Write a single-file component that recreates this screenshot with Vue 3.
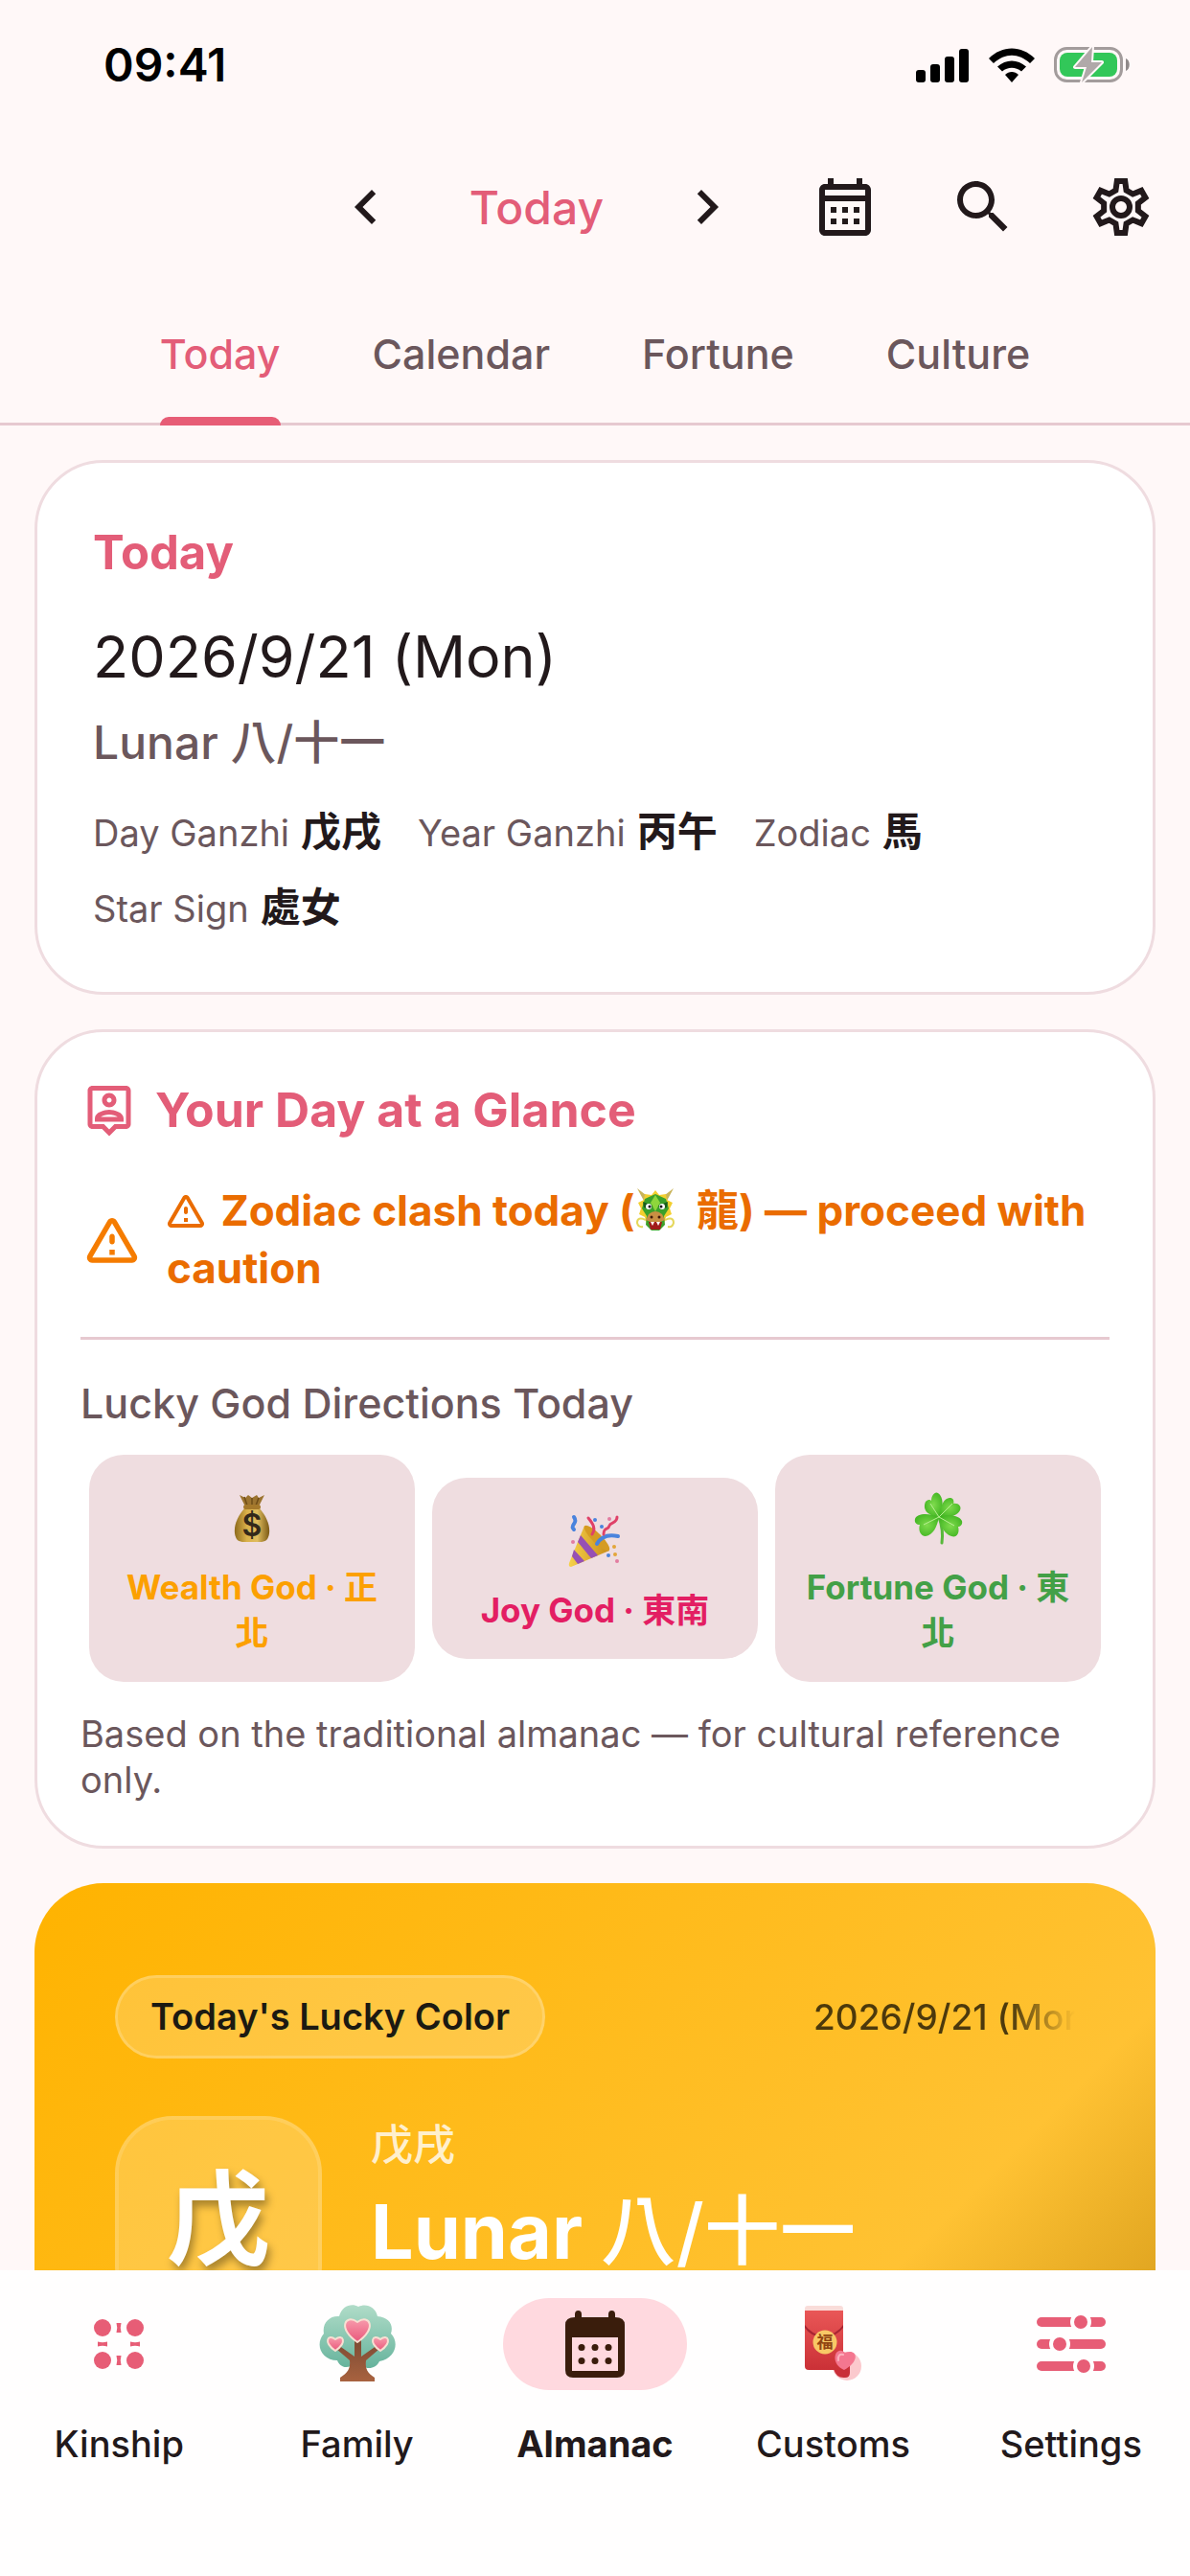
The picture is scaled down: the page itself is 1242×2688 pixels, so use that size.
<template>
  <div class="app">
    <header class="top">
      <div class="status">
        <span class="time">09:41</span>
        <div class="status-icons">
          <svg width="56" height="36" viewBox="0 0 56 36" aria-hidden="true">
            <rect x="0" y="23" width="10" height="13" rx="3" />
            <rect x="15" y="17" width="10" height="19" rx="3" />
            <rect x="30" y="9" width="10" height="27" rx="3" />
            <rect x="45" y="1" width="10" height="35" rx="3" />
          </svg>
          <svg width="48" height="36" viewBox="0 0 48 36" aria-hidden="true">
            <path d="M0 11C14-3 34-3 48 11l-5 5C31 5 17 5 5 16z" />
            <path d="M9 19.500c9-8 21-8 30 0l-5 5c-6-5-14-5-20 0z" />
            <path d="M17 28c4-4 10-4 14 0l-7 8z" />
          </svg>
          <svg width="80" height="40" viewBox="0 0 80 40" aria-hidden="true">
            <rect x="1.500" y="2.500" width="69" height="34" rx="12" fill="none" stroke="#a39c9c" stroke-width="3" />
            <rect x="6" y="7" width="60" height="25" rx="8" fill="#32c759" />
            <path d="M75 13c5 2 5 11 0 13z" fill="#8f8989" />
            <path d="M40 1L22 22h12l-5 16 21-21H39z" fill="#b0a9a9" stroke="#fff8f8" stroke-width="4" stroke-linejoin="round" paint-order="stroke" />
          </svg>
        </div>
      </div>

      <div class="toolbar">
        <button class="icon-btn" aria-label="Previous day">
          <svg class="icon" viewBox="0 0 24 24"><path d="M15.410 7.410L14 6l-6 6 6 6 1.410-1.410L10.830 12z" /></svg>
        </button>
        <button class="today-btn">Today</button>
        <button class="icon-btn" aria-label="Next day">
          <svg class="icon" viewBox="0 0 24 24"><path d="M10 6L8.590 7.410 13.170 12l-4.580 4.590L10 18l6-6z" /></svg>
        </button>
        <button class="icon-btn" aria-label="Pick a date">
          <svg class="icon" viewBox="0 0 24 24">
            <path d="M19 4h-1V2h-2v2H8V2H6v2H5c-1.110 0-1.990.9-1.990 2L3 20c0 1.100.890 2 2 2h14c1.100 0 2-.9 2-2V6c0-1.100-.9-2-2-2zm0 16H5V10h14v10zm0-12H5V6h14v2zM9 14H7v-2h2v2zm4 0h-2v-2h2v2zm4 0h-2v-2h2v2zm-8 4H7v-2h2v2zm4 0h-2v-2h2v2zm4 0h-2v-2h2v2z" />
          </svg>
        </button>
        <button class="icon-btn" aria-label="Search">
          <svg class="icon" viewBox="0 0 24 24">
            <path d="M15.500 14h-.79l-.28-.27C15.410 12.590 16 11.110 16 9.500 16 5.910 13.090 3 9.500 3S3 5.910 3 9.500 5.910 16 9.500 16c1.610 0 3.090-.59 4.230-1.570l.27.28v.79l5 4.990L20.490 19l-4.990-5zm-6 0C7.010 14 5 11.990 5 9.500S7.010 5 9.500 5 14 7.010 14 9.500 11.990 14 9.500 14z" />
          </svg>
        </button>
        <button class="icon-btn" aria-label="Options">
          <svg class="icon line" viewBox="0 0 24 24">
            <path d="M10.600 3L13.400 3L13.850 6.200L16.100 7.500L19.090 6.290L20.490 8.710L17.950 10.700V13.300L20.490 15.290L19.090 17.710L16.100 16.500L13.850 17.800L13.400 21H10.600L10.150 17.800L7.900 16.500L4.910 17.710L3.510 15.290L6.050 13.300V10.700L3.510 8.710L4.910 6.290L7.900 7.500L10.150 6.200z" />
            <circle cx="12" cy="12" r="3" />
          </svg>
        </button>
      </div>

      <nav class="tabs">
        <a v-for="tab in tabs" :key="tab" href="#" :class="['tab', { active: tab === currentTab }]" @click.prevent="currentTab = tab">
          <span>{{ tab }}</span>
        </a>
      </nav>
    </header>

    <main class="content">
      <section class="card today-card">
        <h2 class="title">Today</h2>
        <p class="date">2026/9/21 (Mon)</p>
        <p class="lunar">Lunar 八/十一</p>
        <dl class="facts">
          <div v-for="fact in facts" :key="fact.label" class="fact">
            <dt>{{ fact.label }}</dt>
            <dd>{{ fact.value }}</dd>
          </div>
        </dl>
      </section>

      <section class="card glance-card">
        <div class="glance-head">
          <svg class="pin" viewBox="0 0 24 24" aria-hidden="true">
            <path d="M19 2H5c-1.110 0-2 .9-2 2v14c0 1.100.890 2 2 2h4l3 3 3-3h4c1.100 0 2-.9 2-2V4c0-1.100-.9-2-2-2zm0 16h-4.830l-.59.590L12 20.170l-1.590-1.590-.58-.58H5V4h14v14zM12 11c1.650 0 3-1.350 3-3s-1.350-3-3-3-3 1.350-3 3 1.350 3 3 3zm0-4c.550 0 1 .450 1 1s-.450 1-1 1-1-.450-1-1 .450-1 1-1zm6 8.580c0-2.500-3.970-3.580-6-3.580s-6 1.080-6 3.580V17h12v-1.420zM8.480 15c.740-.510 2.230-1 3.520-1s2.780.490 3.520 1H8.480z" />
          </svg>
          <h2 class="title">Your Day at a Glance</h2>
        </div>

        <div class="warning">
          <svg class="warning-icon" viewBox="0 0 24 24" aria-hidden="true"><path :d="warningPath" /></svg>
          <p>
            <svg class="warning-inline" viewBox="2 3 20 19" aria-hidden="true"><path :d="warningPath" /></svg>
            Zodiac clash today (<svg class="dragon" viewBox="0 0 42 48" role="img" aria-label="Dragon">
              <path d="M9 14L2 1l13 10zM33 14L40 1 27 11z" fill="#c9b45a" />
              <path d="M21 3l4 5 7-1 1 6 6 3-3 6 2 6-6 3-2 7H12l-2-7-6-3 2-6-3-6 6-3 1-6 7 1z" fill="#f3cf2e" />
              <path d="M21 7l11 5 3 10-5 8 1 9-6 6h-8l-6-6 1-9-5-8 3-10z" fill="#3ba02a" />
              <path d="M21 8l5 8-5 9-5-9z" fill="#8ed63c" />
              <path d="M8 15l10 4-3 4-6-2zM34 15l-10 4 3 4 6-2z" fill="#185c1c" />
              <circle cx="14" cy="20" r="3" fill="#fff" />
              <circle cx="28" cy="20" r="3" fill="#fff" />
              <circle cx="15" cy="20" r="1.500" fill="#111" />
              <circle cx="27" cy="20" r="1.500" fill="#111" />
              <path d="M14 28q7-6 14 0l3 6q-10 5-20 0z" fill="#c98f43" />
              <path d="M14 36h14l-2 8H16z" fill="#a11a1a" />
              <path d="M16 36l2 4 2-4M22 36l2 4 2-4" fill="#fff" />
              <circle cx="17" cy="31" r="1.500" fill="#401a0c" />
              <circle cx="25" cy="31" r="1.500" fill="#401a0c" />
              <path d="M11 34q-9-4-9 3 1 5 6 4M31 34q9-4 9 3-1 5-6 4" fill="none" stroke="#e5d75a" stroke-width="2" />
            </svg>
            龍) — proceed with caution
          </p>
        </div>

        <hr />

        <h3 class="subtitle">Lucky God Directions Today</h3>
        <div class="gods">
          <div v-for="god in gods" :key="god.name" :class="['god', god.kind]">
            <svg v-if="god.kind === 'wealth'" class="emoji" viewBox="0 0 60 60" aria-hidden="true">
              <defs>
                <linearGradient id="bag" x1="0" x2="1">
                  <stop offset="0" stop-color="#8d6a1c" />
                  <stop offset=".35" stop-color="#d9b14a" />
                  <stop offset=".65" stop-color="#e0bd5e" />
                  <stop offset="1" stop-color="#7c5a15" />
                </linearGradient>
              </defs>
              <path d="M23 18L17 6l6 3 3-3 4 3 5-3 2 3 6-3-6 12z" fill="#9c7430" />
              <path d="M25 17L22 8M30 17V9M34 17l3-8" stroke="#6f4d18" stroke-width="1.500" />
              <path d="M23 19h14c8 9 12 18 11 27-1 7-4 9-10 9H22c-6 0-9-2-10-9-1-9 3-18 11-27z" fill="url(#bag)" />
              <rect x="21" y="16" width="18" height="5" rx="2.500" fill="#a5792b" />
              <text x="30" y="49" text-anchor="middle" class="coin">$</text>
            </svg>
            <svg v-else-if="god.kind === 'joy'" class="emoji" viewBox="0 0 60 60" aria-hidden="true">
              <defs>
                <linearGradient id="cone" x1="0" x2="1">
                  <stop offset="0" stop-color="#f6d24a" />
                  <stop offset="1" stop-color="#c98d1a" />
                </linearGradient>
              </defs>
              <path d="M19 14c10 3 22 16 26 26L5 57q-3 0-2-4z" fill="url(#cone)" />
              <path d="M15 24l18 21-7 3-14-17zM8 39l11 12-7 3-6-8z" fill="#9650b5" />
              <ellipse cx="32" cy="27" rx="5" ry="18" transform="rotate(-45 32 27)" fill="#d59b23" />
              <path d="M8 18c-5-5 5-6 0-13M32 33c5-9 13-10 22-8" fill="none" stroke="#4a83dd" stroke-width="4" stroke-linecap="round" />
              <path d="M27 23c4-6 1-11-4-17M39 23c0-8 5-4 6-9 1-4 8-2 8-9" fill="none" stroke="#df4168" stroke-width="3" stroke-linecap="round" />
              <g fill="#4a83dd"><circle cx="30" cy="8" r="2" /><circle cx="37" cy="15" r="2" /><circle cx="44" cy="45" r="2" /></g>
              <g fill="#e27da0"><circle cx="45" cy="7" r="2" /><circle cx="53" cy="51" r="2" /><circle cx="7" cy="31" r="2" /></g>
              <g fill="#e3a63a"><circle cx="50" cy="36" r="2" /><circle cx="51" cy="44" r="2" /></g>
            </svg>
            <svg v-else class="emoji" viewBox="0 0 60 60" aria-hidden="true">
              <defs>
                <radialGradient id="leaf" cx=".5" cy=".5" r=".6">
                  <stop offset="0" stop-color="#7fdb4d" />
                  <stop offset="1" stop-color="#3fb320" />
                </radialGradient>
              </defs>
              <path d="M31 29q5 14 3 27" fill="none" stroke="#58b83b" stroke-width="3" stroke-linecap="round" />
              <path d="M31 29C17 27 14 20 17 13c3-3 5-2 6-1 0-6 4-10 7-8 6 4 6 15 1 25z" fill="url(#leaf)" />
              <path d="M31 29C32 17 37 8 43 9c3 0 4 4 3 6 5-1 9 3 7 7-3 6-12 8-22 7z" fill="url(#leaf)" />
              <path d="M31 29C18 24 8 26 6 31c-1 4 2 6 5 6-2 6 1 12 6 12 8-1 12-10 14-20z" fill="url(#leaf)" />
              <path d="M31 29c12-4 22-1 24 4 1 4-2 6-4 6 2 7-2 12-7 10-7-2-12-11-13-20z" fill="url(#leaf)" />
              <path d="M31 29L22 15M31 29l14-14M31 29L15 37M31 29l16 9" stroke="#b9ef93" stroke-width="1" />
            </svg>
            <p>{{ god.name }} · {{ god.direction }}</p>
          </div>
        </div>
        <p class="note">Based on the traditional almanac — for cultural reference only.</p>
      </section>

      <section class="lucky-card">
        <div class="lucky-head">
          <span class="chip">Today's Lucky Color</span>
          <span class="lucky-date">2026/9/21 (Mon)</span>
        </div>
        <div class="lucky-body">
          <div class="stem">戊</div>
          <div class="lucky-text">
            <p class="ganzhi">戊戌</p>
            <p class="lucky-lunar">Lunar <span>八/十一</span></p>
          </div>
        </div>
      </section>
    </main>

    <nav class="bottom-nav">
      <a v-for="item in navItems" :key="item" href="#" :class="['nav-item', { active: item === currentNav }]" @click.prevent="currentNav = item">
        <span class="nav-icon">
          <svg v-if="item === 'Kinship'" width="54" height="54" viewBox="0 0 54 54" fill="#e75d76" aria-hidden="true">
            <circle cx="10" cy="10" r="9" /><circle cx="44" cy="10" r="9" />
            <circle cx="10" cy="44" r="9" /><circle cx="44" cy="44" r="9" />
            <path d="M24.500 5h5q-1.500 5 0 10h-5q1.500-5 0-10zM24.500 39h5q-1.500 5 0 10h-5q1.500-5 0-10zM5 24.500v5q5-1.500 10 0v-5q-5 1.500-10 0zM39 24.500v5q5-1.500 10 0v-5q-5 1.500-10 0z" />
          </svg>
          <svg v-else-if="item === 'Family'" width="82" height="82" viewBox="0 0 82 82" aria-hidden="true">
            <defs>
              <linearGradient id="crown" x1="0" y1="0" x2="0" y2="1">
                <stop offset="0" stop-color="#b0dcc8" />
                <stop offset="1" stop-color="#66b39c" />
              </linearGradient>
              <linearGradient id="trunk" x1="0" y1="0" x2="0" y2="1">
                <stop offset="0" stop-color="#7d4b34" />
                <stop offset="1" stop-color="#a8623f" />
              </linearGradient>
              <linearGradient id="heart" x1="0" y1="0" x2="0" y2="1">
                <stop offset="0" stop-color="#f79aab" />
                <stop offset="1" stop-color="#e9587b" />
              </linearGradient>
            </defs>
            <path d="M22 12C25 0 36-2 42 2c8-4 18 0 20 10 12 1 17 9 14 18 9 9 5 26-12 29-3 7-12 9-17 5H34c-7 3-12-1-14-6C4 58-4 42 6 30 4 19 12 11 22 12z" fill="url(#crown)" />
            <path d="M38 37h7v17l17-12 2 4-14 12c-1 8 1 13 9 18v4H23v-4c8-5 11-10 10-18L19 46l2-4 17 12z" fill="url(#trunk)" />
            <g fill="url(#heart)" stroke="#f8dfd2" stroke-width="2" stroke-linejoin="round">
              <path d="M41 39C20 25 28 9 41 18c13-9 21 7 0 21z" />
              <path d="M18 48C5 39 10 30 18 36c8-6 13 3 0 12z" />
              <path d="M65 48c-13-9-8-18 0-12 8-6 13 3 0 12z" />
            </g>
          </svg>
          <svg v-else-if="item === 'Almanac'" width="62" height="70" viewBox="0 0 62 70" aria-hidden="true">
            <path fill-rule="evenodd" d="M10 7V4q0-4 3.500-4T17 4v3h28V4q0-4 3.500-4T52 4v3q10 0 10 8v47q0 8-8 8H8q-8 0-8-8V15q0-8 10-8zM7 28v35h48V28z" />
            <circle cx="17" cy="38.500" r="3.500" /><circle cx="31" cy="38.500" r="3.500" /><circle cx="45" cy="38.500" r="3.500" />
            <circle cx="17" cy="52.500" r="3.500" /><circle cx="31" cy="52.500" r="3.500" /><circle cx="45" cy="52.500" r="3.500" />
          </svg>
          <svg v-else-if="item === 'Customs'" width="60" height="80" viewBox="0 0 60 80" aria-hidden="true">
            <defs>
              <linearGradient id="packet" x1="0" y1="0" x2="0" y2="1">
                <stop offset="0" stop-color="#e95757" />
                <stop offset="1" stop-color="#ca3036" />
              </linearGradient>
            </defs>
            <rect x="1" y="0" width="40" height="12" rx="3" fill="#f9dcd9" />
            <circle cx="45" cy="63" r="15" fill="#fbc9cd" />
            <path d="M32 60h16v10q0 5-5 5-9 1-12-9z" fill="#c92e38" />
            <path d="M1 5h40v62H5q-4 0-4-4z" fill="url(#packet)" />
            <path d="M1 20q6 9 20 12Q35 29 41 20v3q-7 9-20 11Q7 32 1 23z" fill="#a72532" />
            <circle cx="22" cy="38" r="12.500" fill="#f8c866" />
            <text x="22" y="44" text-anchor="middle" class="fu">福</text>
            <path d="M42 67C26 60 33 40 43 49c12-5 17 8-1 18z" fill="#f47790" />
            <path d="M36 57q-1-7 5-6" fill="none" stroke="#fbb1bd" stroke-width="2" stroke-linecap="round" />
          </svg>
          <svg v-else width="72" height="62" viewBox="0 0 72 62" fill="#e75d76" aria-hidden="true">
            <rect y="3" width="72" height="10" rx="5" />
            <rect y="26" width="72" height="10" rx="5" />
            <rect y="49" width="72" height="10" rx="5" />
            <g stroke="#fffefe" stroke-width="4">
              <circle cx="46" cy="8" r="9" /><circle cx="24" cy="31" r="9" /><circle cx="49" cy="54" r="9" />
            </g>
          </svg>
        </span>
        <span class="nav-label">{{ item }}</span>
      </a>
    </nav>
  </div>
</template>

<script setup>
import { ref } from 'vue';

const tabs = ['Today', 'Calendar', 'Fortune', 'Culture'];
const currentTab = ref('Today');

const facts = [
  { label: 'Day Ganzhi', value: '戊戌' },
  { label: 'Year Ganzhi', value: '丙午' },
  { label: 'Zodiac', value: '馬' },
  { label: 'Star Sign', value: '處女' },
];

const gods = [
  { kind: 'wealth', name: 'Wealth God', direction: '正北' },
  { kind: 'joy', name: 'Joy God', direction: '東南' },
  { kind: 'fortune', name: 'Fortune God', direction: '東北' },
];

const navItems = ['Kinship', 'Family', 'Almanac', 'Customs', 'Settings'];
const currentNav = ref('Almanac');

// Used large beside the message and small inside it
const warningPath =
  'M12 5.990L19.530 19H4.470L12 5.990M2.740 18c-.770 1.330.190 3 1.730 3h15.060c1.540 0 2.500-1.670 1.730-3L13.730 4.990c-.770-1.330-2.690-1.330-3.460 0L2.740 18zM11 11v2c0 .550.450 1 1 1s1-.450 1-1v-2c0-.550-.450-1-1-1s-1 .450-1 1zm0 5h2v2h-2v-2z';
</script>

<style>
body {
  margin: 0;
  background: #fff8f8;
}
</style>

<style scoped>
.app {
  display: flex;
  flex-direction: column;
  height: 100vh;
  background: #fff8f8;
  color: #22191b;
  font-family: Inter, "Noto Sans CJK TC", sans-serif;
}

h2,
h3,
p,
dl,
dd {
  margin: 0;
}

a {
  color: inherit;
  text-decoration: none;
}

button {
  padding: 0;
  border: none;
  background: none;
  color: inherit;
  font: inherit;
}

svg {
  flex: none;
}

/* Header */
.top {
  flex: none;
}

.status {
  display: flex;
  align-items: center;
  justify-content: space-between;
  height: 132px;
  padding: 3px 62px 0 108px;
  box-sizing: border-box;
  color: #000;
}

.time {
  font-size: 48px;
  font-weight: 600;
}

.status-icons {
  display: flex;
  align-items: center;
  gap: 20px;
}

.toolbar {
  display: flex;
  align-items: center;
  justify-content: flex-end;
  height: 168px;
}

.icon-btn {
  display: flex;
  align-items: center;
  justify-content: center;
  width: 144px;
  height: 144px;
}

.icon {
  width: 72px;
  height: 72px;
  fill: #22191b;
}

.line {
  fill: none;
  stroke: #22191b;
  stroke-width: 2;
}

.today-btn {
  padding: 0 36px;
  color: #e35d78;
  font-size: 48px;
  font-weight: 500;
}

.tabs {
  display: flex;
  justify-content: center;
  height: 141px;
  border-bottom: 3px solid #e6c9d0;
}

.tab {
  padding: 3px 48px 0;
  color: #6b575c;
  font-size: 43px;
  font-weight: 500;
  line-height: 132px;
}

.tab span {
  display: block;
}

.tab.active {
  color: #e35d78;
}

/* The marker lies over the divider */
.tab.active span::after {
  content: "";
  display: block;
  height: 9px;
  border-radius: 9px 9px 0 0;
  background: #e75d76;
}

/* Cards */
.content {
  flex: 1;
  display: flex;
  flex-direction: column;
  gap: 36px;
  min-height: 0;
  padding: 36px 36px 0;
  overflow: hidden;
}

.card,
.lucky-card {
  flex: none;
}

.card {
  border: 3px solid #efdce0;
  border-radius: 72px;
  background: #fff;
}

.today-card {
  padding: 64px 58px 60px;
}

.title {
  color: #e35d78;
  font-size: 49px;
  font-weight: 700;
  line-height: 60px;
}

.date {
  margin-top: 36px;
  font-size: 61px;
  line-height: 84px;
}

.lunar {
  margin-top: 18px;
  color: #6b575c;
  font-size: 48px;
  font-weight: 500;
  line-height: 60px;
}

.facts {
  display: flex;
  flex-wrap: wrap;
  gap: 24px 38px;
  margin-top: 36px;
  line-height: 54px;
}

.fact {
  display: flex;
  align-items: baseline;
  gap: 12px;
}

.fact dt {
  color: #6b575c;
  font-size: 38px;
}

.fact dd {
  font-size: 42px;
  font-weight: 700;
}

.glance-card {
  padding: 51px 45px 45px;
}

.glance-head {
  display: flex;
  align-items: center;
  gap: 18px;
}

.glance-head .title {
  font-size: 50px;
}

.pin {
  width: 60px;
  height: 60px;
  fill: #e35d78;
}

.warning {
  display: flex;
  align-items: center;
  gap: 24px;
  margin-top: 45px;
  color: #ea6c00;
  font-size: 44px;
  font-weight: 700;
  line-height: 60px;
}

.warning-icon {
  width: 66px;
  height: 66px;
  fill: #f57c00;
}

.warning-inline {
  width: 40px;
  height: 38px;
  margin-right: 6px;
  fill: #ea6c00;
  vertical-align: -4px;
}

.dragon {
  width: 42px;
  height: 48px;
  margin-right: 12px;
  vertical-align: -8px;
}

hr {
  height: 3px;
  margin: 42px 0 36px;
  border: none;
  background: #e6c9d0;
}

.subtitle {
  color: #6b575c;
  font-size: 43px;
  font-weight: 500;
  line-height: 60px;
}

.gods {
  display: grid;
  grid-template-columns: repeat(3, 1fr);
  align-items: center;
  gap: 18px;
  margin-top: 24px;
  padding: 0 9px;
}

.god {
  display: flex;
  flex-direction: column;
  align-items: center;
  gap: 18px;
  padding: 36px 30px 27px;
  border-radius: 36px;
  background: #efdde0;
  font-size: 35px;
  font-weight: 700;
  line-height: 48px;
  text-align: center;
}

.emoji {
  width: 60px;
  height: 60px;
}

.coin {
  fill: #33291a;
  font-size: 32px;
  font-weight: 600;
}

.wealth {
  color: #fca000;
}

.joy {
  color: #e31e63;
}

.fortune {
  color: #43a047;
}

.note {
  margin-top: 30px;
  color: #6b575c;
  font-size: 38px;
  line-height: 48px;
}

/* Lucky colour */
.lucky-card {
  padding: 96px 84px;
  border-radius: 72px;
  background: linear-gradient(135deg, #ffb300 0, #ffc233 920px, #dfa420 1130px);
}

.lucky-head {
  display: flex;
  align-items: center;
  justify-content: space-between;
}

.chip {
  padding: 0 34px;
  border: 3px solid rgba(255, 255, 255, 0.35);
  border-radius: 44px;
  background: rgba(255, 255, 255, 0.2);
  background-clip: padding-box;
  color: #1c1a12;
  font-size: 38px;
  font-weight: 600;
  line-height: 81px;
}

/* Runs out of room and fades at its right end */
.lucky-date {
  width: 273px;
  overflow: hidden;
  color: rgba(0, 0, 0, 0.7);
  font-size: 37px;
  font-weight: 500;
  line-height: 48px;
  white-space: nowrap;
  mask-image: linear-gradient(to right, #000 75%, transparent);
}

.lucky-body {
  display: flex;
  gap: 51px;
  margin-top: 60px;
}

.stem {
  width: 208px;
  border: 4px solid rgba(255, 255, 255, 0.3);
  border-radius: 60px;
  background: rgba(255, 255, 255, 0.2);
  background-clip: padding-box;
  color: #fff;
  font-size: 108px;
  font-weight: 700;
  line-height: 208px;
  text-align: center;
  text-shadow: 3px 6px 9px rgba(0, 0, 0, 0.35);
}

.ganzhi {
  color: rgba(255, 255, 255, 0.8);
  font-size: 44px;
  font-weight: 500;
  line-height: 60px;
}

.lucky-lunar {
  margin-top: 12px;
  color: #fff;
  font-size: 79px;
  font-weight: 700;
  line-height: 96px;
}

.lucky-lunar span {
  font-weight: 500;
}

/* Bottom navigation */
.bottom-nav {
  flex: none;
  display: grid;
  grid-template-columns: repeat(5, 1fr);
  padding: 29px 0 114px;
  background: #fffefe;
}

.nav-item {
  display: flex;
  flex-direction: column;
  align-items: center;
  gap: 32px;
}

.nav-icon {
  display: flex;
  align-items: center;
  justify-content: center;
  width: 192px;
  height: 96px;
  border-radius: 48px;
  fill: #3a1d0c;
}

.active .nav-icon {
  background: #ffd9df;
}

.fu {
  fill: #914512;
  font-size: 17px;
  font-weight: 700;
}

.nav-label {
  font-size: 38px;
  font-weight: 500;
  line-height: 48px;
}

.active .nav-label {
  font-weight: 700;
}
</style>
